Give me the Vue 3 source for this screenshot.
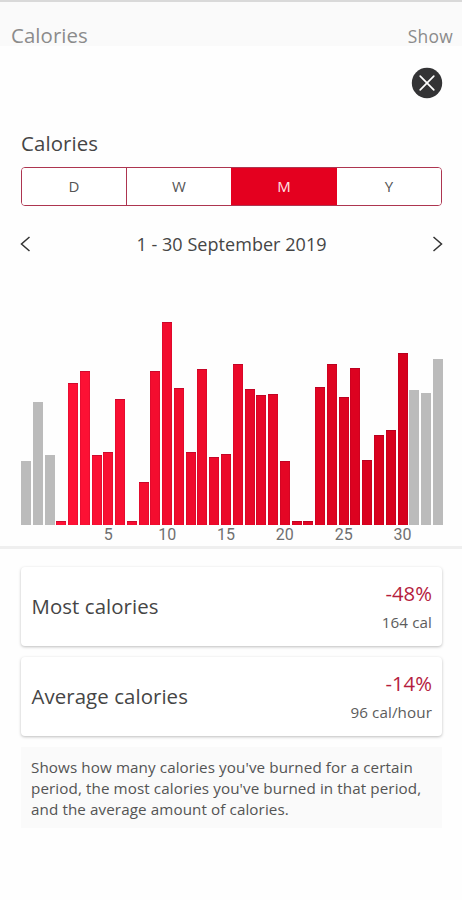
<script setup>
import { ref } from 'vue'

const periods = ['D', 'W', 'M', 'Y']
const selected = ref('M')

const before = [64, 123.5, 70]
const month = [
  4.5, 142.3, 154.5, 70.3, 73, 126, 4.5, 43.3, 154.5, 203,
  137.3, 73, 156, 68, 71.5, 161, 136, 129.7, 131, 64,
  4.5, 4.5, 138.3, 161, 128.3, 157.3, 65.3, 90, 95.3, 172,
]
const after = [134.7, 132.3, 165.7]

const bars = [
  ...before.map((height) => ({ height, outside: true })),
  ...month.map((height, i) => ({ height, day: i + 1, tone: i / 29 })),
  ...after.map((height) => ({ height, outside: true })),
]

// The red deepens as the month goes on.
function barStyle(bar) {
  const style = { height: bar.height + 'px' }
  if (!bar.outside) {
    const mix = (a, b) => Math.round(a + (b - a) * bar.tone)
    style.backgroundColor = `rgb(${mix(255, 214)}, ${mix(18, 0)}, ${mix(54, 28)})`
  }
  return style
}

const stats = [
  { label: 'Most calories', change: '-48%', value: '164 cal' },
  { label: 'Average calories', change: '-14%', value: '96 cal/hour' },
]
</script>

<template>
  <div class="screen">
    <header class="topbar">
      <span class="topbar-title">Calories</span>
      <span class="topbar-action">Show</span>
    </header>

    <div class="close-row">
      <button class="close" aria-label="Close">
        <svg width="32" height="32" viewBox="0 0 32 32">
          <circle cx="16" cy="16" r="15.2" fill="#333335" />
          <path d="M9.2 9.2 L22.8 22.8 M22.8 9.2 L9.2 22.8" stroke="#fff" stroke-width="1.7" stroke-linecap="round" />
        </svg>
      </button>
    </div>

    <h1 class="title">Calories</h1>

    <div class="segments">
      <button
        v-for="p in periods"
        :key="p"
        class="segment"
        :class="{ active: p === selected }"
        @click="selected = p"
      >{{ p }}</button>
    </div>

    <div class="range">
      <svg width="11" height="16" viewBox="0 0 11 16"><path d="M9.5 1 L1.5 8 L9.5 15" /></svg>
      <span>1 - 30 September 2019</span>
      <svg width="11" height="16" viewBox="0 0 11 16"><path d="M1.5 1 L9.5 8 L1.5 15" /></svg>
    </div>

    <div class="chart">
      <div v-for="(bar, i) in bars" :key="i" class="slot">
        <div class="bar" :class="{ outside: bar.outside }" :style="barStyle(bar)"></div>
        <span class="tick">{{ bar.day && bar.day % 5 === 0 ? bar.day : '' }}</span>
      </div>
    </div>

    <div class="divider"></div>

    <section class="cards">
      <article v-for="s in stats" :key="s.label" class="card">
        <span class="card-label">{{ s.label }}</span>
        <div class="card-figures">
          <span class="change">{{ s.change }}</span>
          <span class="value">{{ s.value }}</span>
        </div>
      </article>
      <p class="note">
        Shows how many calories you've burned for a certain<br />
        period, the most calories you've burned in that period,<br />
        and the average amount of calories.
      </p>
    </section>
  </div>
</template>

<style>
body {
  background: #fefefe;
}
</style>

<style scoped>
.screen {
  box-sizing: border-box;
  width: 462px;
  height: 900px;
  overflow: hidden;
  border-top: 2px solid #d9d9d9;
  background: #fefefe;
  color: #454545;
  font-family: "Open Sans", "Noto Sans", sans-serif;
}
.topbar {
  display: flex;
  justify-content: space-between;
  box-sizing: border-box;
  height: 44px;
  padding: 0 9px 0 11px;
  background: #fafafa;
  color: #8b8b8b;
}
.topbar-title {
  font-size: 20.4px;
  letter-spacing: 0.08px;
  line-height: 66px;
}
.topbar-action {
  font-size: 17.4px;
  letter-spacing: 0.3px;
  line-height: 69px;
}
.close-row {
  display: flex;
  justify-content: flex-end;
  height: 83px;
  padding: 21px 19px 0 0;
  box-sizing: border-box;
}
.close {
  width: 32px;
  height: 32px;
  padding: 0;
  border: 0;
  background: none;
}
.close svg {
  display: block;
}
.title {
  margin: 0 0 0 21px;
  font-size: 20.4px;
  font-weight: 400;
  letter-spacing: 0.12px;
  line-height: 28px;
  padding-bottom: 10px;
}
.segments {
  display: flex;
  box-sizing: border-box;
  width: 421px;
  height: 39px;
  margin-left: 21px;
  border: 1px solid #ad3550;
  border-radius: 4px;
  overflow: hidden;
}
.segment {
  flex: 1;
  padding: 0;
  border: 0;
  border-left: 1px solid #ad3550;
  background: #fff;
  color: #555;
  font: 15px/37px "Open Sans", "Noto Sans", sans-serif;
}
.segment:first-child {
  border-left: 0;
}
.segment.active {
  background: #e4001f;
  border-color: #e4001f;
  color: #ffe3e6;
}
.segment.active + .segment {
  border-color: #e4001f;
}
.range {
  display: flex;
  align-items: center;
  justify-content: space-between;
  height: 28px;
  margin: 24px 19px 0 20px;
  font-size: 18px;
  letter-spacing: 0.05px;
}
.range svg {
  fill: none;
  stroke: #333;
  stroke-width: 1.5;
}
.chart {
  display: flex;
  gap: 1.77px;
  height: 288px;
  padding-left: 21px;
}
.slot {
  display: flex;
  flex: none;
  width: 10px;
  flex-direction: column;
  align-items: center;
  justify-content: flex-end;
}
.bar {
  box-sizing: border-box;
  flex: none;
  width: 10px;
  border-top: 1px solid rgba(120, 0, 35, 0.35);
  box-shadow: inset 1px 0 rgba(120, 0, 35, 0.14), inset -1px 0 rgba(120, 0, 35, 0.14);
}
.bar.outside {
  border-top: 0;
  background: #bbb;
  box-shadow: none;
}
.tick {
  flex: none;
  height: 21px;
  color: #707070;
  font: 16px/20px Roboto, sans-serif;
  white-space: nowrap;
}
.divider {
  height: 3px;
  background: #efefef;
}
.cards {
  padding: 18px 20px 0 21px;
}
.card {
  display: flex;
  align-items: center;
  justify-content: space-between;
  box-sizing: border-box;
  height: 79px;
  margin-bottom: 11px;
  padding: 0 10px 0 10.5px;
  border-radius: 4px;
  background: #fff;
  box-shadow: 0 1px 3px rgba(0, 0, 0, 0.26);
}
.card-label {
  padding-bottom: 2px;
  font-size: 20.4px;
  letter-spacing: 0.08px;
}
.card-figures {
  display: flex;
  flex-direction: column;
  align-items: flex-end;
  padding-top: 2px;
}
.change {
  color: #b51d3e;
  font-size: 20.3px;
  line-height: 29px;
}
.value {
  color: #5c5c5c;
  font-size: 15.2px;
  letter-spacing: 0.1px;
  line-height: 28px;
}
.note {
  box-sizing: border-box;
  height: 81px;
  margin: 0;
  padding: 10px 0 0 10px;
  background: #fafafa;
  color: #545454;
  font-size: 15.2px;
  letter-spacing: 0.1px;
  line-height: 21px;
  white-space: nowrap;
}
</style>
